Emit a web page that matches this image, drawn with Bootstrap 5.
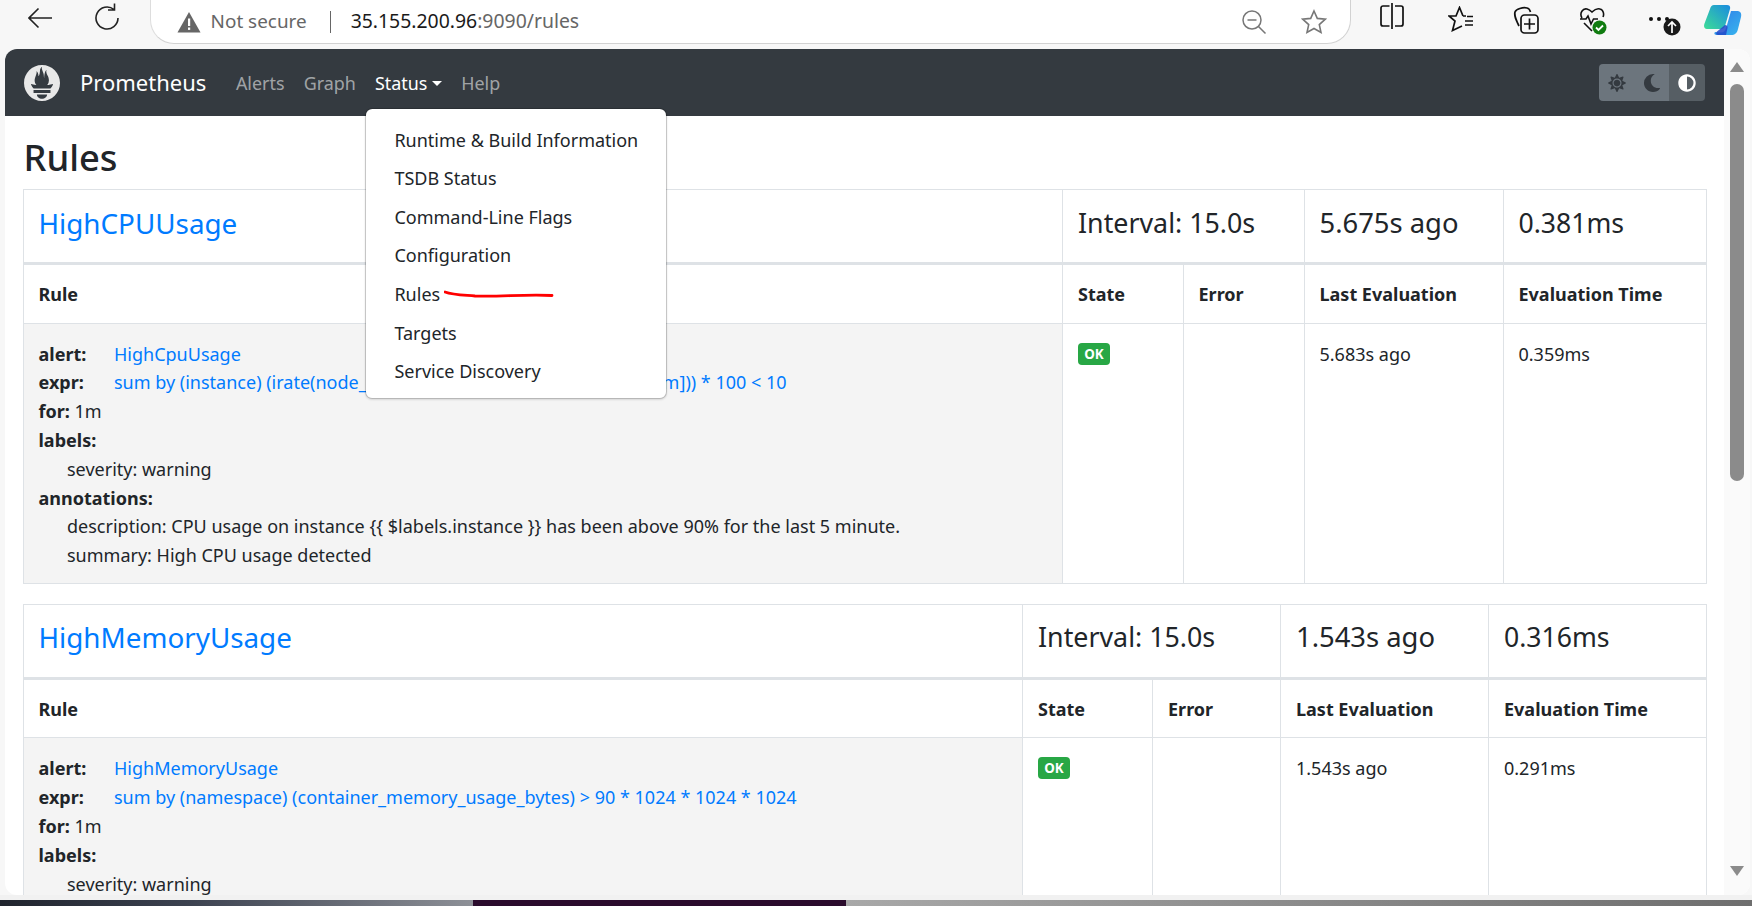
<!DOCTYPE html>
<html lang="en">
<head>
<meta charset="utf-8">
<title>Prometheus Time Series Collection and Processing Server</title>
<link rel="stylesheet" href="https://cdn.jsdelivr.net/npm/bootstrap@5.3.0/dist/css/bootstrap.min.css">
<style>
html{font-size:19.2px}
body{margin:0;height:906px;overflow:hidden;background:#f7f7f7;font-family:"Noto Sans","Open Sans",sans-serif;font-size:18px;line-height:28.8px;color:#212529}
.desk{height:906px}
.chrome-bar{height:49px;padding-left:28px;flex:none}
.chrome-btn{width:24px;height:36px;flex:none;margin-top:0}
.gap-reload{margin-left:43px}
.addr{width:1201px;height:47px;margin:-3px 0 0 31px;padding:3px 0 0 26px;background:#fff;border:1px solid #d2d2d2;border-top:0;border-radius:0 0 24px 24px;border-left-color:#ddd;flex:none;font-size:18.9px;color:#666;white-space:nowrap}
.addr-sep{width:1px;height:22px;background:#666;margin:0 20px 0 23px}
.addr-url{font-size:19.4px}
.addr-host{color:#1a1a1a}
.addr-star{margin:0 23px 0 34px}
.ico-split{margin:3px 0 0 29px;width:24px;height:26px}
.ico-fav{margin:6px 0 0 44px;width:26px;height:26px}
.ico-coll{margin:6px 0 0 39px;width:26px;height:28px}
.ico-health{margin:6px 0 0 40px;width:30px;height:30px}
.ico-dots{margin:12px 0 0 39px;width:36px;height:30px}
.ico-copilot{margin:3px 0 0 20px;width:38px;height:34px}
.win{height:846px;margin:0 2px 0 5px;border-radius:12px;overflow:hidden;background:#fff;flex:none}
.view{min-width:0;overflow:hidden}
.scroll-rail{width:26px;flex:none;background:#fafafa;padding:13px 6px 0}
.rail-thumb{height:397px;margin-top:12px;background:#8b8b8b;border-radius:8px}
.rail-down{margin-top:385px}
.prom-nav{height:67px;padding:0 19px;background:#343a40;flex-wrap:nowrap}
.prom-nav .navbar-brand{font-size:22px;margin-right:20px;padding:0;color:#fff}
.prom-logo{width:36px;height:36px;margin-right:20px;fill:#e8e8e8}
.prom-nav .navbar-nav{padding-top:2px}
.prom-nav .nav-link{padding:0 9.6px;font-size:17.9px;color:rgba(255,255,255,.55)}
.prom-nav .nav-link.open-link{color:#fff}
.prom-nav .status-menu{position:absolute;left:0;top:39px;width:302px;padding:11.5px 0 7.5px;margin:0;font-size:18px;--bs-dropdown-border-color:rgba(0,0,0,.15);box-shadow:0 1px 2px rgba(0,0,0,.12)}
.status-menu .dropdown-item{padding:5px 28px 5px;height:38.6px;line-height:28.6px;color:#212529;position:relative}
.red-stroke{position:absolute;left:78px;top:14px;width:110px;height:10px}
.theme-grp{margin-left:auto;height:37px}
.theme-btn{width:36px;padding:0;background:#6c757d;border:0;border-radius:0;display:flex;align-items:center;justify-content:center}
.theme-btn svg{width:18px;height:18px;fill:#343a40}
.theme-btn:first-child{border-radius:4px 0 0 4px}
.theme-btn:last-child{border-radius:0 4px 4px 0;background:#565e64}
.theme-btn:last-child svg{fill:#fff}
.rules-main{padding:0 17px 0 17.5px}
.rules-title{font-size:36.3px;line-height:42px;font-weight:500;margin:0;padding-top:20px;height:73px;padding-bottom:0;padding-left:1px}
.rules-title span{display:block}
.rule-tbl{table-layout:fixed;width:100%;margin:0;--bs-table-border-color:#dee2e6;--bs-table-color:#212529;border-collapse:collapse}
.rule-tbl td,.rule-tbl th{padding:16px 15px 12.8px;line-height:28.8px;font-size:18px}
.rule-tbl th{font-weight:700;font-size:18px;padding-top:15px;padding-bottom:13.8px}
.rule-tbl .grp-row td{height:74px;padding-top:15.5px;padding-bottom:0;border-bottom-width:3px;font-weight:400;vertical-align:top}
.rule-tbl .mono-h{line-height:34.5px;margin:0;font-weight:400}
.rule-tbl .h-link{font-size:27.8px}
.rule-tbl .h-int{font-size:26.8px}
.rule-tbl .h-ago{font-size:27.4px}
.rule-tbl .h-ms{font-size:26.6px}
.rule-tbl a{color:#007bff;text-decoration:none}
.rule-cell{background:#f4f4f4!important}
.rule-line{display:flex}
.rule-line b{width:75.5px;flex:none;font-weight:700}
.rule-sub{padding-left:28.5px}
.rule-tbl b{font-size:18px}
.expr-hid{letter-spacing:.24px}
.st-badge{background:#28a745;border-radius:4px;color:#fff;font-size:13.4px;font-weight:700;line-height:22px;padding:0;width:32px;height:22px;display:inline-block;text-align:center;vertical-align:top;margin-top:3px}
.rules-gap{height:20px}
.tall-cell{padding-bottom:60px!important}
.strip{height:11px;flex:none;padding-top:5px;background:#f1f1f1}
.strip-a{width:473px;background:linear-gradient(90deg,#20242e,#3c4250 40%,#8d9097)}
.strip-b{width:373px;background:#2a0b2c}
.strip-c{flex:1;background:linear-gradient(90deg,#a8a8a8,#6e6e6e)}
</style>
</head>
<body>
<div class="desk d-flex flex-column">
  <div class="chrome-bar d-flex align-items-start">
    <svg class="chrome-btn" viewBox="0 0 24 36" fill="none" stroke="#222" stroke-width="1.6"><path d="M24 18H1M10.500 8.500 1 18l9.500 9.500"/></svg>
    <svg class="chrome-btn gap-reload" viewBox="0 0 24 36" fill="none" stroke="#222" stroke-width="1.6"><path d="M19 9.500A11 11 0 1 0 23 18M19.500 3.500v6.500h-6.500"/></svg>
    <div class="addr d-flex align-items-center">
      <svg width="24" height="22" viewBox="0 0 24 22" class="me-2"><path fill="#666" d="M12 1 23.500 21.500H.5z"/><rect x="11" y="7.500" width="2.200" height="7.500" fill="#fff"/><rect x="11" y="16.500" width="2.200" height="2.400" fill="#fff"/></svg>
      <span>Not secure</span><span class="addr-sep"></span><span class="addr-url"><span class="addr-host">35.155.200.96</span>:9090/rules</span>
      <svg class="ms-auto" width="26" height="26" viewBox="0 0 26 26" fill="none" stroke="#777" stroke-width="1.5"><circle cx="11" cy="11" r="9"/><path d="M6.500 11h9M17.500 17.500l7 7"/></svg>
      <svg class="addr-star" width="26" height="26" viewBox="0 0 26 26" fill="none" stroke="#777" stroke-width="1.6"><path d="m13 2 3.300 7.400 8 .8-6 5.400 1.700 7.900-7-4-7 4 1.700-7.900-6-5.400 8-.8z"/></svg>
    </div>
    <svg class="chrome-btn ico-split" viewBox="0 0 24 26" fill="none" stroke="#111" stroke-width="1.700"><path d="M9.500 3H3a2 2 0 0 0-2 2v16a2 2 0 0 0 2 2h6.500M15 3h6a2 2 0 0 1 2 2v16a2 2 0 0 1-2 2h-6M12 0v26"/></svg>
    <svg class="chrome-btn ico-fav" viewBox="0 0 26 26" fill="none" stroke="#111" stroke-width="1.700"><path d="M15 10 11.500 1.500 8 10H1l6 5-2.500 9.500L14 20M15 10h3M17 15h8M17 19h8M19 10.500h6"/></svg>
    <svg class="chrome-btn ico-coll" viewBox="0 0 26 28" fill="none" stroke="#111" stroke-width="1.700"><path d="M6 20C3 14 1 10 2 6c1-3 8-5 12-4 2 .5 3 2 3.500 4"/><rect x="8" y="9" width="17" height="18" rx="3.500"/><path d="M16.500 12.500v11M11 18h11"/></svg>
    <svg class="chrome-btn ico-health" viewBox="0 0 30 30" fill="none" stroke="#111" stroke-width="1.600"><path d="M3 12C0 7 4 2 8 3c2 .5 4 2 5 3 2-2 5-4 8-3 4 1 4 6 3 8M1 13h6l2-3 3 8 2.500-5H19M5 17l8 8"/><circle cx="20.500" cy="21.500" r="7" fill="#107c10" stroke="none"/><path d="m17 21.500 2.500 2.500 4.500-4.500" stroke="#fff" stroke-width="1.800"/></svg>
    <svg class="chrome-btn ico-dots" viewBox="0 0 36 30"><circle cx="3" cy="7" r="2" fill="#111"/><circle cx="11" cy="7" r="2" fill="#111"/><circle cx="19" cy="7" r="2" fill="#111"/><circle cx="24" cy="15" r="8.500" fill="#1a1a1a"/><path d="M24 21V10M20 14l4-4 4 4" fill="none" stroke="#fff" stroke-width="1.700"/></svg>
    <svg class="chrome-btn ico-copilot" viewBox="0 0 38 34"><defs><linearGradient id="cpa" x1="0" y1="1" x2="1" y2="0"><stop offset="0" stop-color="#3ddc97"/><stop offset="1" stop-color="#1a8be0"/></linearGradient><linearGradient id="cpb" x1="0" y1="0" x2="1" y2="1"><stop offset="0" stop-color="#2f7ce8"/><stop offset="1" stop-color="#38b6ee"/></linearGradient></defs><path fill="url(#cpa)" d="M10 2h13c3 0 3.500 2 3 4l-5 17c-.7 2-2 3-4 3H3C0 26-.5 23 .5 20.500L6 6c.7-2.500 2-4 4-4z"/><path fill="url(#cpb)" d="M27 8h6c3 0 5 2 4 6l-3 12c-1 4-3 6-7 6H13c-2 0-3.500-1-2-3l6 .5c2.500 0 4-1.500 5-4z"/><path fill="#2148c9" d="M21 22c1.500 0 3 1 2.500 3L22 32h-7c-3 0-3.500-1.500-2-3.500z" opacity=".85"/></svg>
  </div>

  <div class="win d-flex">
    <div class="view flex-grow-1">
      <nav class="navbar prom-nav">
        <a class="navbar-brand d-flex align-items-center" href="#">
          <svg class="prom-logo" viewBox="0 0 24 24"><path d="M12 0C5.373 0 0 5.372 0 12c0 6.627 5.373 12 12 12s12-5.373 12-12c0-6.628-5.373-12-12-12zm0 22.460c-1.885 0-3.414-1.260-3.414-2.814h6.828c0 1.553-1.528 2.813-3.414 2.813zm5.640-3.745H6.360v-2.046h11.280v2.046zm-.04-3.098H6.391c-.037-.043-.075-.086-.111-.130-1.155-1.401-1.427-2.133-1.690-2.879-.005-.025 1.400.287 2.395.511 0 0 .513.119 1.262.255-.720-.843-1.147-1.915-1.147-3.010 0-2.406 1.845-4.508 1.180-6.207.648.053 1.340 1.367 1.387 3.422.689-.951.977-2.690.977-3.755 0-1.103.727-2.385 1.454-2.429-.648 1.069.168 1.984.894 4.256.272.854.237 2.290.447 3.201.070-1.892.395-4.652 1.595-5.605-.529 1.200.079 2.702.494 3.424.671 1.164 1.078 2.047 1.078 3.716a4.642 4.642 0 0 1-1.110 2.996c.792-.149 1.340-.283 1.340-.283l2.573-.502s-.374 1.538-1.810 3.019z"/></svg>
          Prometheus
        </a>
        <ul class="navbar-nav flex-row me-auto">
          <li class="nav-item"><a class="nav-link" href="#">Alerts</a></li>
          <li class="nav-item"><a class="nav-link" href="#">Graph</a></li>
          <li class="nav-item position-relative dropdown">
            <a class="nav-link dropdown-toggle open-link" href="#">Status</a>
            <div class="dropdown-menu show status-menu">
              <a class="dropdown-item" href="#">Runtime &amp; Build Information</a>
              <a class="dropdown-item" href="#">TSDB Status</a>
              <a class="dropdown-item" href="#">Command-Line Flags</a>
              <a class="dropdown-item" href="#">Configuration</a>
              <a class="dropdown-item" href="#">Rules<svg class="red-stroke" viewBox="0 0 110 10" fill="none" stroke="#f00" stroke-width="2.800" stroke-linecap="round"><path d="M1 3c8 3 18 3 30 4 25 1 50-2 77-.5"/></svg></a>
              <a class="dropdown-item" href="#">Targets</a>
              <a class="dropdown-item" href="#">Service Discovery</a>
            </div>
          </li>
          <li class="nav-item"><a class="nav-link" href="#">Help</a></li>
        </ul>
        <div class="btn-group theme-grp">
          <button class="btn btn-sm theme-btn" type="button" aria-label="Light"><svg viewBox="0 0 512 512"><path d="M256 160c-52.900 0-96 43.100-96 96s43.100 96 96 96 96-43.100 96-96-43.100-96-96-96zm246.400 80.500l-94.700-47.300 33.500-100.400c4.500-13.600-8.400-26.500-21.900-21.900l-100.400 33.500-47.400-94.800c-6.400-12.800-24.600-12.800-31 0l-47.300 94.700L92.700 70.800c-13.600-4.500-26.500 8.400-21.900 21.900l33.500 100.400-94.700 47.400c-12.800 6.400-12.800 24.600 0 31l94.700 47.300-33.500 100.500c-4.500 13.600 8.400 26.500 21.900 21.900l100.400-33.500 47.300 94.700c6.400 12.800 24.600 12.800 31 0l47.300-94.700 100.400 33.500c13.600 4.500 26.500-8.400 21.900-21.900l-33.500-100.400 94.700-47.300c13-6.500 13-24.700.2-31.100zm-155.900 106c-49.900 49.900-131.100 49.900-181 0-49.900-49.900-49.900-131.100 0-181 49.900-49.900 131.100-49.900 181 0 49.900 49.900 49.900 131.100 0 181z"/></svg></button>
          <button class="btn btn-sm theme-btn" type="button" aria-label="Dark"><svg viewBox="0 0 512 512"><path d="M283 512c79 0 151-36 199-95 7-9-1-22-12-20-130 25-249-75-249-206 0-76 40-145 106-183 10-6 7-21-4-23A256 256 0 0 0 283 0 256 256 0 0 0 27 256c0 141 115 256 256 256z"/></svg></button>
          <button class="btn btn-sm theme-btn" type="button" aria-label="Auto"><svg viewBox="0 0 512 512"><path d="M8 256c0 137 111 248 248 248s248-111 248-248S393 8 256 8 8 119 8 256zm248 184V72a184 184 0 0 1 0 368z"/></svg></button>
        </div>
      </nav>

      <main class="rules-main">
        <h2 class="rules-title"><span>Rules</span></h2>

        <table class="table table-bordered rule-tbl">
          <colgroup><col style="width:1039.5px"><col style="width:120.5px"><col style="width:121px"><col style="width:199px"><col></colgroup>
          <tbody>
            <tr class="grp-row">
              <td><p class="mono-h h-link"><a href="#">HighCPUUsage</a></p></td>
              <td colspan="2"><p class="mono-h h-int">Interval: 15.0s</p></td>
              <td><p class="mono-h h-ago">5.675s ago</p></td>
              <td><p class="mono-h h-ms">0.381ms</p></td>
            </tr>
            <tr><th>Rule</th><th>State</th><th>Error</th><th>Last Evaluation</th><th>Evaluation Time</th></tr>
            <tr>
              <td class="rule-cell">
                <div class="rule-line"><b>alert:</b><a href="#">HighCpuUsage</a></div>
                <div class="rule-line"><b>expr:</b><a href="#">sum by (instance) (irate(node_<span class="expr-hid">cpu_seconds_total{mode="idle"}</span>[5m])) * 100 &lt; 10</a></div>
                <div><b>for:</b> 1m</div>
                <div><b>labels:</b></div>
                <div class="rule-sub">severity: warning</div>
                <div><b>annotations:</b></div>
                <div class="rule-sub">description: CPU usage on instance {{ $labels.instance }} has been above 90% for the last 5 minute.</div>
                <div class="rule-sub">summary: High CPU usage detected</div>
              </td>
              <td><span class="st-badge">OK</span></td>
              <td></td>
              <td>5.683s ago</td>
              <td>0.359ms</td>
            </tr>
          </tbody>
        </table>

        <div class="rules-gap"></div>

        <table class="table table-bordered rule-tbl">
          <colgroup><col style="width:999.5px"><col style="width:130px"><col style="width:128px"><col style="width:208px"><col></colgroup>
          <tbody>
            <tr class="grp-row">
              <td><p class="mono-h h-link"><a href="#">HighMemoryUsage</a></p></td>
              <td colspan="2"><p class="mono-h h-int">Interval: 15.0s</p></td>
              <td><p class="mono-h h-ago">1.543s ago</p></td>
              <td><p class="mono-h h-ms">0.316ms</p></td>
            </tr>
            <tr><th>Rule</th><th>State</th><th>Error</th><th>Last Evaluation</th><th>Evaluation Time</th></tr>
            <tr>
              <td class="rule-cell tall-cell">
                <div class="rule-line"><b>alert:</b><a href="#">HighMemoryUsage</a></div>
                <div class="rule-line"><b>expr:</b><a href="#">sum by (namespace) (container_memory_usage_bytes) &gt; 90 * 1024 * 1024 * 1024</a></div>
                <div><b>for:</b> 1m</div>
                <div><b>labels:</b></div>
                <div class="rule-sub">severity: warning</div>
              </td>
              <td><span class="st-badge">OK</span></td>
              <td></td>
              <td>1.543s ago</td>
              <td>0.291ms</td>
            </tr>
          </tbody>
        </table>
      </main>
    </div>
    <div class="scroll-rail">
      <svg class="d-block" width="14" height="10" viewBox="0 0 14 10"><path d="M7 0l7 10H0z" fill="#8b8b8b"/></svg>
      <div class="rail-thumb"></div>
      <svg class="d-block rail-down" width="14" height="10" viewBox="0 0 14 10"><path d="M7 10 14 0H0z" fill="#8b8b8b"/></svg>
    </div>
  </div>
  <div class="strip d-flex"><div class="strip-a"></div><div class="strip-b"></div><div class="strip-c"></div></div>
</div>
<script src="https://cdn.jsdelivr.net/npm/bootstrap@5.3.0/dist/js/bootstrap.bundle.min.js"></script>
</body>
</html>
